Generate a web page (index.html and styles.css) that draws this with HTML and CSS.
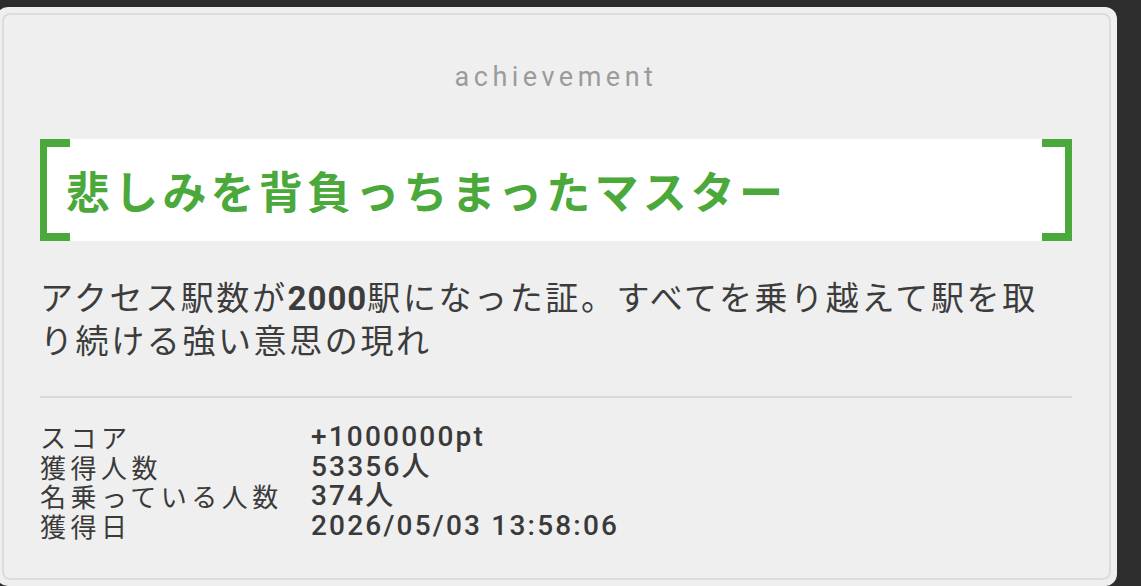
FILE: index.html
```html
<!DOCTYPE html>
<html>
<head>
    <title>achievement</title>
    <link rel="stylesheet" href="styles.css">
</head>
<body>
    <div class="card">
        <div class="card-inner">
            <div class="label">achievement</div>

            <div class="title-box">
                <h1 class="title">悲しみを背負っちまったマスター</h1>
            </div>

            <p class="desc">アクセス駅数が<b>2000</b>駅になった証。すべてを乗り越えて駅を取り続ける強い意思の現れ</p>

            <div class="divider"></div>

            <div class="stats">
                <div class="stat-key">スコア</div>
                <div class="stat-val">+1000000pt</div>
                <div class="stat-key">獲得人数</div>
                <div class="stat-val">53356人</div>
                <div class="stat-key">名乗っている人数</div>
                <div class="stat-val">374人</div>
                <div class="stat-key">獲得日</div>
                <div class="stat-val">2026/05/03 13:58:06</div>
            </div>
        </div>
    </div>
</body>
</html>
```

FILE: styles.css
```css
html, body {
    margin: 0;
    height: 100%;
    overflow: hidden;
}

body {
    background-color: #2d2d2d;
    font-family: "Noto Sans CJK JP", sans-serif;
    color: #3a3a3a;
}

.card {
    margin: 7px 0 0 -4px;
    width: 1121px;
    height: 579px;
    box-sizing: border-box;
    padding: 6px;
    background-color: #efefef;
    border-radius: 12px;
}

.card-inner {
    height: 100%;
    box-sizing: border-box;
    border: 2px solid #dcdcdc;
    border-radius: 8px;
    padding: 46px 37px 0 36px;
}

.label {
    text-align: center;
    font-family: Roboto, "Noto Sans", sans-serif;
    font-size: 27px;
    line-height: 32px;
    letter-spacing: 4.5px;
    color: #9b9b9b;
}

.title-box {
    position: relative;
    margin-top: 46px;
    height: 102px;
    background-color: #fff;
    display: flex;
    align-items: center;
    padding-left: 26px;
}

.title-box::before,
.title-box::after {
    content: "";
    position: absolute;
    top: 0;
    bottom: 0;
    width: 23px;
    border: 7px solid #4ba83b;
    border-top-width: 8px;
    border-bottom-width: 8px;
}

.title-box::before {
    left: 0;
    border-right: none;
}

.title-box::after {
    right: 0;
    border-left: none;
}

.title {
    margin: 0;
    font-size: 44px;
    line-height: 50px;
    font-weight: bold;
    letter-spacing: 4.2px;
    color: #4ba83b;
}

.desc {
    margin: 34px 0 0 0;
    font-size: 33px;
    line-height: 43px;
    letter-spacing: 2.6px;
    color: #3c3c3c;
}

.desc b {
    font-family: Roboto, "Noto Sans", sans-serif;
    font-weight: bold;
    line-height: 1;
    letter-spacing: 1px;
}

.divider {
    margin-top: 35px;
    height: 2px;
    background-color: #d8d8d8;
}

.stats {
    margin-top: 24px;
    display: grid;
    grid-template-columns: 271px auto;
    font-size: 26px;
    line-height: 29.5px;
    letter-spacing: 4.5px;
}

.stat-val {
    font-family: Roboto, "Noto Sans CJK JP", sans-serif;
    font-weight: 500;
    font-size: 28px;
    letter-spacing: 2.2px;
}
```
